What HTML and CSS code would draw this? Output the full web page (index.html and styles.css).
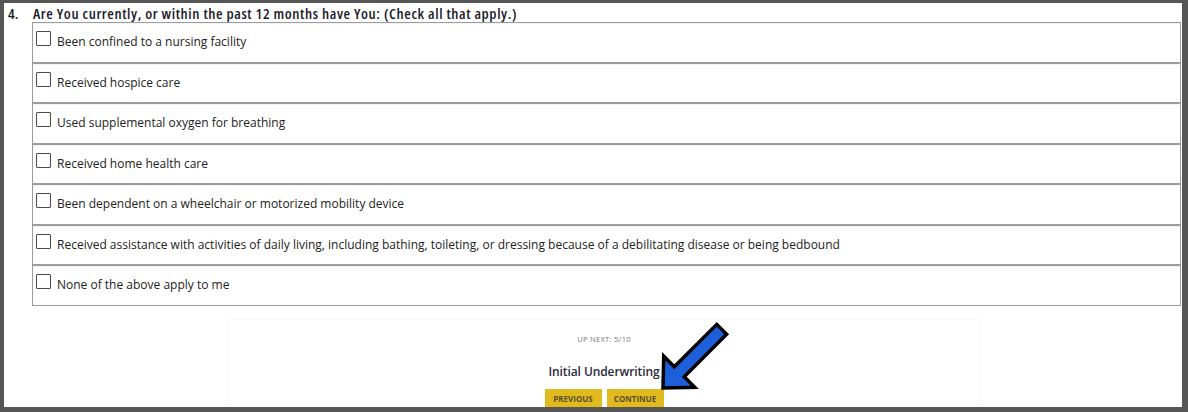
FILE: index.html
```html
<!DOCTYPE html>
<html>
<head>
<meta charset="utf-8">
<link rel="stylesheet" href="styles.css">
</head>
<body>
<div class="frame">
  <div class="q-title"><span class="q-num">4.</span><span class="q-text">Are You currently, or within the past 12 months have You: (Check all that apply.)</span></div>
  <div class="options">
    <div class="opt"><span class="cb"></span><span class="lbl">Been confined to a nursing facility</span></div>
    <div class="opt"><span class="cb"></span><span class="lbl">Received hospice care</span></div>
    <div class="opt"><span class="cb"></span><span class="lbl">Used supplemental oxygen for breathing</span></div>
    <div class="opt"><span class="cb"></span><span class="lbl">Received home health care</span></div>
    <div class="opt"><span class="cb"></span><span class="lbl">Been dependent on a wheelchair or motorized mobility device</span></div>
    <div class="opt"><span class="cb"></span><span class="lbl">Received assistance with activities of daily living, including bathing, toileting, or dressing because of a debilitating disease or being bedbound</span></div>
    <div class="opt"><span class="cb"></span><span class="lbl">None of the above apply to me</span></div>
  </div>
  <div class="next-panel">
    <div class="up-next">UP NEXT: 5/10</div>
    <div class="next-title">Initial Underwriting</div>
    <div class="btns"><span class="btn">PREVIOUS</span><span class="btn">CONTINUE</span></div>
  </div>
  <svg class="arrow" width="100" height="100" viewBox="0 0 100 100">
    <g transform="translate(18 82) rotate(-45)">
      <polygon points="0,0 23,-22 23,-7 83,-7 83,7 23,7 23,22" fill="#1d5fd8" stroke="#000" stroke-width="3.5" stroke-linejoin="miter"/>
    </g>
  </svg>
</div>
</body>
</html>
```

FILE: styles.css
```css
html, body {
  margin: 0;
  padding: 0;
  background: #565656;
  height: 412px;
  overflow: hidden;
}
.frame {
  position: relative;
  margin: 3px 6px 0 4px;
  height: 404px;
  background: #ffffff;
  overflow: hidden;
  font-family: "Open Sans", "Noto Sans", sans-serif;
  color: #222;
}
.q-title {
  display: flex;
  height: 19px;
  align-items: flex-end;
  padding-left: 4px;
  font-size: 15px;
  font-weight: 600;
  font-stretch: 87.5%;
  letter-spacing: 0.6px;
  line-height: 17px;
  color: #1b1b2b;
}
.q-num {
  width: 25px;
  letter-spacing: 0;
}
.options {
  margin-left: 28px;
  margin-right: 1px;
}
.opt {
  display: flex;
  align-items: flex-start;
  height: 38.57px;
  border: 1px solid #9c9c9c;
  box-shadow: inset 0 1px 0 #f3f3f3;
}
.cb {
  flex: none;
  width: 13px;
  height: 13px;
  margin: 8px 6px 0 3px;
  border: 1.5px solid #4a4a4a;
  border-radius: 1px;
}
.lbl {
  font-size: 12px;
  line-height: 16px;
  margin-top: 11px;
  color: #222;
}
.next-panel {
  width: 752px;
  margin: 14px 0 0 224px;
  height: 100px;
  box-shadow: 0 0 3px rgba(0,0,0,0.07);
  text-align: center;
}
.up-next {
  padding-top: 14px;
  font-size: 7.5px;
  letter-spacing: 0.3px;
  line-height: 10px;
  color: #777;
}
.next-title {
  margin-top: 20px;
  font-size: 12px;
  font-weight: 600;
  letter-spacing: -0.1px;
  line-height: 16px;
  color: #2b2b3b;
}
.btns {
  display: flex;
  justify-content: center;
  gap: 5px;
  margin-top: 9px;
}
.btn {
  width: 57px;
  height: 18px;
  background: #e0ba1e;
  font-size: 8px;
  font-weight: 700;
  line-height: 20px;
  color: #5b4f2a;
}
.arrow {
  position: absolute;
  left: 641px;
  top: 303px;
}
```
